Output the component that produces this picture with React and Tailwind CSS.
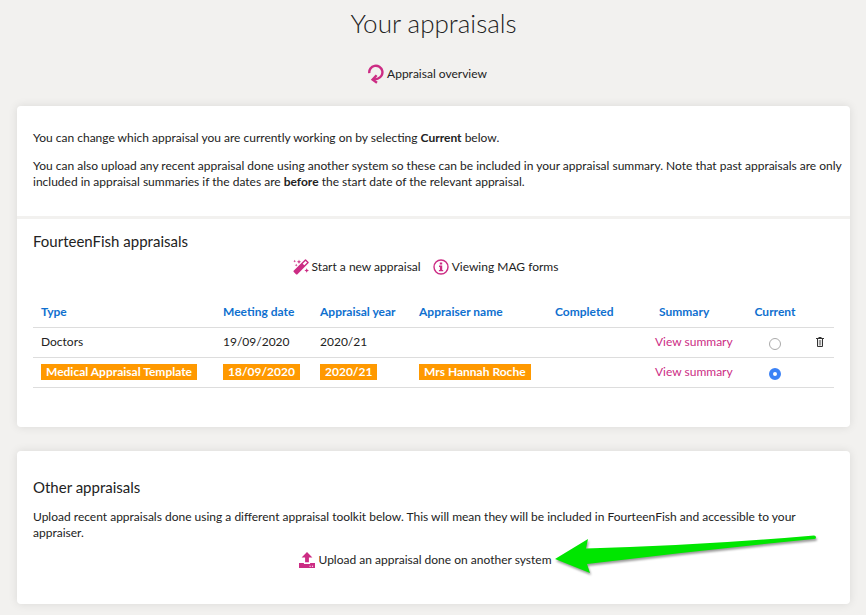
import React, { useState } from 'react';

const appraisals = [
  { id: 1, type: 'Doctors', meetingDate: '19/09/2020', year: '2020/21', appraiser: '', canDelete: true },
  {
    id: 2,
    type: 'Medical Appraisal Template',
    meetingDate: '18/09/2020',
    year: '2020/21',
    appraiser: 'Mrs Hannah Roche',
    canDelete: false,
  },
];

function OverviewIcon() {
  return (
    <svg className="h-5 w-4 text-[#cc2c84]" viewBox="0 0 16 20" fill="none" stroke="currentColor" strokeWidth="2.4">
      <path d="M1.3 9.200A6.600 6.600 0 1 1 9.800 14.600L6 15.600" />
      <path d="M8.600 11.200L4.600 15.600L9 18.800" />
    </svg>
  );
}

function WandIcon() {
  return (
    <svg className="size-4 text-[#cc2c84]" viewBox="0 0 16 16" fill="currentColor">
      <path
        fillRule="evenodd"
        d="M12 .4Q12.500 0 13 .4L15.600 3Q16 3.500 15.600 4L4.200 15.400Q3.700 15.800 3.200 15.400L.6 12.800Q.2 12.300.6 11.800ZM12.500 1.900L9.700 4.700L11.300 6.300L14.100 3.500Z"
      />
      <path d="M6 .6l.6 1.600 1.600.6-1.600.6L6 5l-.6-1.600-1.600-.6 1.600-.6zM1.700.8l.4 1 1 .4-1 .4-.4 1-.4-1-1-.4 1-.4zM3.200 4.800l.4 1 1 .4-1 .4-.4 1-.4-1-1-.4 1-.4zM13.700 9.200l.7 1.600 1.600.7-1.600.7-.7 1.600-.7-1.600-1.600-.7 1.600-.7z" />
    </svg>
  );
}

function InfoIcon() {
  return (
    <svg className="size-4 text-[#cc2c84]" viewBox="0 0 16 16" fill="currentColor">
      <circle cx="8" cy="8" r="7" fill="none" stroke="currentColor" strokeWidth="1.4" />
      <path d="M6.800 3.600h2.400v1.900H6.800zM6 6.600h3.200v4.300h1v1.400H5.900v-1.400h1V8H6z" />
    </svg>
  );
}

function UploadIcon() {
  return (
    <svg className="size-4 text-[#cc2c84]" viewBox="0 0 16 16" fill="currentColor">
      <path d="M8 0l5.400 5.400H9.900v4.900H6.100V5.400H2.600z" />
      <path
        fillRule="evenodd"
        d="M0 11h4.900v.9h6.200V11H16v5H0zM10.500 13.700v1h1.200v-1zM12.900 13.700v1h1.200v-1z"
      />
    </svg>
  );
}

function TrashIcon() {
  return (
    <svg className="h-[10px] w-2 text-[#333]" viewBox="0 0 8 10" fill="none" stroke="currentColor">
      <path d="M0 1.500h8M2.500.5h3M1.500 2v7.500h5V2" />
      <path d="M3.300 3v5.500M4.700 3v5.500" strokeWidth=".6" />
    </svg>
  );
}

// green pointer that runs over the upload link
function Arrow() {
  return (
    <svg
      className="pointer-events-none absolute top-1/2 left-full h-[46px] w-[268px] -translate-y-1/2 overflow-visible"
      viewBox="0 0 268 46"
      aria-hidden="true"
    >
      <path
        className="drop-shadow-[1px_2px_1px_rgba(0,0,0,0.4)]"
        fill="#00e600"
        d="M3 22L36 2L34 11.500Q150 8.500 262 -1.500Q264 -1.500 264 .5Q264 2 262 2Q150 13 35 27L38 36Z"
      />
    </svg>
  );
}

function ActionLink({ icon, children }) {
  return (
    <a href="#" className="relative inline-flex items-center gap-[3px] whitespace-nowrap">
      {icon}
      {children}
    </a>
  );
}

function Cell({ highlight, children }) {
  return (
    <td className="px-2 whitespace-nowrap">
      {highlight && children ? (
        <span className="inline-block bg-[#ff9900] px-[5px] font-bold text-white">{children}</span>
      ) : (
        children
      )}
    </td>
  );
}

function AppraisalsTable() {
  const [current, setCurrent] = useState(2);

  return (
    <table className="w-full table-fixed text-left">
      <colgroup>
        <col />
        <col className="w-[97px]" />
        <col className="w-[99px]" />
        <col className="w-[136px]" />
        <col className="w-[100px]" />
        <col className="w-[98px]" />
        <col className="w-[60px]" />
        <col className="w-[29px]" />
      </colgroup>
      <thead>
        <tr className="h-[30px] border-b border-[#ddd] text-[#0f70cf]">
          <th className="px-2">Type</th>
          <th className="px-2">Meeting date</th>
          <th className="px-2">Appraisal year</th>
          <th className="px-2">Appraiser name</th>
          <th className="px-2">Completed</th>
          <th className="px-3">Summary</th>
          <th className="text-center">Current</th>
          <td></td>
        </tr>
      </thead>
      <tbody>
        {appraisals.map((item) => {
          const highlight = item.id === 2;
          return (
            <tr key={item.id} className="h-[30px] border-b border-[#ddd]">
              <Cell highlight={highlight}>{item.type}</Cell>
              <Cell highlight={highlight}>{item.meetingDate}</Cell>
              <Cell highlight={highlight}>{item.year}</Cell>
              <Cell highlight={highlight}>{item.appraiser}</Cell>
              <td></td>
              <td className="px-2 whitespace-nowrap">
                <a href="#" className="text-[#cc2c84]">
                  View summary
                </a>
              </td>
              <td>
                <input
                  type="radio"
                  name="current"
                  aria-label={item.type}
                  checked={current === item.id}
                  onChange={() => setCurrent(item.id)}
                  className="mx-auto mt-[3px] block size-3 appearance-none rounded-full border border-[#aaa] bg-white checked:border-4 checked:border-[#3b82f6]"
                />
              </td>
              <td>
                {item.canDelete && (
                  <button type="button" aria-label="Delete" className="mx-auto block">
                    <TrashIcon />
                  </button>
                )}
              </td>
            </tr>
          );
        })}
      </tbody>
    </table>
  );
}

export default function App() {
  return (
    <div className="min-h-screen bg-[#f2f1ef] pt-[7px] pr-4 pb-3 pl-[17px] font-['Lato',sans-serif] text-[12px] leading-4 text-[#222]">
      <h1 className="text-center text-[26px] leading-8 font-light">Your appraisals</h1>
      <div className="mt-[25px] flex justify-center pr-3">
        <ActionLink icon={<OverviewIcon />}>Appraisal overview</ActionLink>
      </div>

      <div className="mt-[22px] rounded bg-white shadow-[0_0_10px_rgba(0,0,0,0.1)]">
        <div className="border-b-3 border-[#f2f1ef] pt-6 pr-2 pb-[26px] pl-4">
          <p>
            You can change which appraisal you are currently working on by selecting <b>Current</b> below.
          </p>
          <p className="mt-3">
            You can also upload any recent appraisal done using another system so these can be included in your
            appraisal summary. Note that past appraisals are only included in appraisal summaries if the dates are{' '}
            <b>before</b> the start date of the relevant appraisal.
          </p>
        </div>
        <div className="px-4 pt-3 pb-[39px]">
          <h2 className="text-[15px] leading-5">FourteenFish appraisals</h2>
          <div className="mt-2 mb-[22px] flex justify-center gap-3 pr-4">
            <ActionLink icon={<WandIcon />}>Start a new appraisal</ActionLink>
            <ActionLink icon={<InfoIcon />}>Viewing MAG forms</ActionLink>
          </div>
          <AppraisalsTable />
        </div>
      </div>

      <div className="mt-6 rounded bg-white px-4 pt-[26px] pb-9 shadow-[0_0_10px_rgba(0,0,0,0.1)]">
        <h2 className="text-[15px] leading-5">Other appraisals</h2>
        <p className="mt-3">
          Upload recent appraisals done using a different appraisal toolkit below. This will mean they will be included
          in FourteenFish and accessible to your appraiser.
        </p>
        <div className="mt-[11px] flex justify-center pr-4">
          <ActionLink icon={<UploadIcon />}>
            Upload an appraisal done on another system
            <Arrow />
          </ActionLink>
        </div>
      </div>
    </div>
  );
}
